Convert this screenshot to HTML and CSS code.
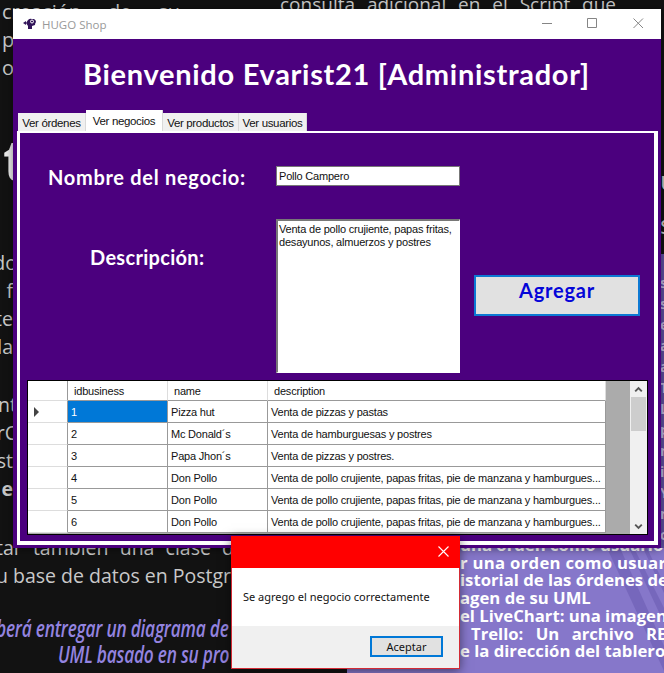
FILE: index.html
```html
<!DOCTYPE html>
<html lang="es">
<head>
<meta charset="utf-8">
<title>HUGO Shop</title>
<link rel="stylesheet" href="styles.css">
</head>
<body>
<div class="desktop">
  <div class="doc doc-intro">
    <p class="spread">creación de su</p>
    <p>p</p>
    <p>o</p>
  </div>
  <p class="doc doc-query">consulta adicional en el Script que</p>
  <p class="doc doc-heading">t</p>
  <div class="doc doc-left">
    <p class="cut">do</p><p>f</p><p>te</p><p>la</p>
  </div>
  <div class="doc doc-left doc-left-lower">
    <p class="cut">nt</p><p class="cut">rC</p><p>st</p><p class="strong">e</p>
  </div>
  <div class="doc doc-base">
    <p class="justified">tar también una clase de</p>
    <p>u base de datos en Postgr</p>
  </div>
  <div class="doc-uml">
    <p>berá entregar un diagrama de</p>
    <p class="second">UML basado en su pro</p>
  </div>
  <div class="doc doc-edge-dark"><p>u</p><p>s</p></div>
  <div class="purple-edge"><p>s</p><p>s</p><p>e</p><p>a</p><p>a</p><p>T</p><p>L</p><p>p</p><p>n</p><p>i</p><p>Y</p><p>n</p><p>c</p></div>
  <div class="purple-page">
    <svg class="streaks" viewBox="0 0 120 125" width="120" height="125"><path d="M63 0h13l44 98v25zM85 0h5l30 60v15zM99 0h4l17 36v9z" fill="#6d5db3"/></svg>
    <div class="purple-lines">
      <p>una orden como usuario n</p>
      <p class="order">r una orden como usuario</p>
      <p>istorial de las órdenes de</p>
      <p>agen de su UML</p>
      <p>el LiveChart: una imagen</p>
      <p class="trello">Trello: Un archivo RE</p>
      <p>e la dirección del tablero</p>
    </div>
  </div>

  <main class="window">
    <header class="titlebar">
      <svg class="logo" viewBox="0 0 14 12" width="14" height="12"><path d="M5 2Q7 0 9 1h2q2 1 2 3-1 1-1 3l-3 1v3H5V8L3 5Z" fill="#32145a"/><path d="M0 5l3-2v4z" fill="#32145a"/><circle cx="9" cy="3.5" r="1.5" fill="none" stroke="#fff"/></svg>
      <span class="app-name">HUGO Shop</span>
      <svg class="controls" viewBox="0 0 104 11" width="104" height="11" fill="none" stroke="#858585"><path d="M0 5.500h10M45.500 .5h9v9h-9zM91.500 .5l9.500 9.500M101 .5l-9.500 9.500"/></svg>
    </header>
    <h1>Bienvenido Evarist21 [Administrador]</h1>
    <nav class="tabs">
      <span class="tab orders">Ver órdenes</span>
      <span class="tab active">Ver negocios</span>
      <span class="tab products">Ver productos</span>
      <span class="tab users">Ver usuarios</span>
    </nav>
    <section class="panel">
      <div class="form">
        <div class="label-name">Nombre del negocio:</div>
        <div class="input">Pollo Campero</div>
        <div class="label-desc">Descripción:</div>
        <div class="textarea">Venta de pollo crujiente, papas fritas,<br>desayunos, almuerzos y postres</div>
        <button class="add">Agregar</button>
      </div>
      <div class="grid">
        <div class="cells">
          <div class="row head"><b></b><span>idbusiness</span><span>name</span><span>description</span></div>
          <div class="row"><b><i class="pointer"></i></b><span class="selected">1</span><span>Pizza hut</span><span>Venta de pizzas y pastas</span></div>
          <div class="row"><b></b><span>2</span><span>Mc Donald´s</span><span>Venta de hamburguesas y postres</span></div>
          <div class="row"><b></b><span>3</span><span>Papa Jhon´s</span><span>Venta de pizzas y postres.</span></div>
          <div class="row"><b></b><span>4</span><span>Don Pollo</span><span>Venta de pollo crujiente, papas fritas, pie de manzana y hamburgues...</span></div>
          <div class="row"><b></b><span>5</span><span>Don Pollo</span><span>Venta de pollo crujiente, papas fritas, pie de manzana y hamburgues...</span></div>
          <div class="row"><b></b><span>6</span><span>Don Pollo</span><span>Venta de pollo crujiente, papas fritas, pie de manzana y hamburgues...</span></div>
        </div>
        <div class="scrollbar">
          <svg viewBox="0 0 17 17" width="17" height="16"><path d="M5 11l3.500-3.500L12 11" fill="none" stroke="#555" stroke-width="2"/></svg>
          <div class="thumb"></div>
          <svg class="down" viewBox="0 0 17 17" width="17" height="16"><path d="M5 7l3.500 3.500L12 7" fill="none" stroke="#555" stroke-width="2"/></svg>
        </div>
      </div>
    </section>
  </main>

  <div class="dialog" role="dialog">
    <header><svg viewBox="0 0 11 11" width="11" height="11"><path d="M.5 .5l10 10M10.500 .5l-10 10" stroke="#fff" stroke-width="1.100"/></svg></header>
    <p class="message">Se agrego el negocio correctamente</p>
    <footer><button>Aceptar</button></footer>
  </div>
</div>
</body>
</html>
```
FILE: styles.css
```css
* { box-sizing: border-box; }
body, p, h1 { margin: 0; }
body { background: #121212; }
.desktop { position: relative; width: 664px; height: 673px; overflow: hidden; background: #121212; }

.doc { position: absolute; color: #c9c9c9; font: 20px/28px "Open Sans", sans-serif; white-space: nowrap; }
.doc-intro { left: 2px; top: -2px; width: 178px; }
.spread { text-align-last: justify; white-space: normal; }
.doc-query { left: 280px; top: -10px; width: 336px; text-align-last: justify; white-space: normal; font-size: 19px; }
.doc-heading { left: 3px; top: 131px; font-size: 58px; line-height: 56px; font-weight: 700; color: #eee; }
.doc-left { left: -14px; top: 249px; width: 27px; font-size: 19.5px; text-align: right; }
.doc-left-lower { top: 391px; }
.doc-left .cut { margin-right: -4px; }
.strong { font-weight: 700; }
.doc-base { left: -4px; top: 534px; width: 249px; font-size: 19.500px; }
.justified { text-align-last: justify; white-space: normal; }
.doc-uml { position: absolute; left: -4px; top: 615px; color: #9484e0; font: italic 600 24px/26px "Open Sans", sans-serif; letter-spacing: -.3px; white-space: nowrap; transform: scaleX(.72); transform-origin: 0 0; }
.doc-uml .second { padding-left: 86px; }
.doc-edge-dark { left: 660px; top: 158px; font-size: 26px; line-height: 44px; }

.purple-edge { position: absolute; left: 660px; top: 254px; width: 4px; height: 300px; padding-top: 18px; overflow: hidden; background: #5f50a0; color: #bdb6df; font: 700 14px/21px "Open Sans", sans-serif; }
.purple-page { position: absolute; left: 347px; top: 548px; width: 317px; height: 125px; background: #8677ca; overflow: hidden; }
.streaks { position: absolute; right: 0; top: 0; opacity: .6; }
.purple-lines { position: relative; margin: -12px 0 0 113px; width: 220px; color: #fff; font: 700 16.700px/17.700px "Open Sans", sans-serif; white-space: nowrap; }
.purple-lines .order { letter-spacing: .3px; }
.purple-lines .trello { margin-left: 11px; width: 193px; word-spacing: 8px; }

.window { position: absolute; left: 13px; top: 9px; width: 648px; height: 539px; display: flex; flex-direction: column; background: #4b007e; box-shadow: 0 1px 9px rgba(0, 0, 0, .45); }
.titlebar { display: flex; align-items: center; height: 30px; padding: 0 14px 0 10px; background: #fff; color: #999; font: 11.500px "Open Sans", sans-serif; }
.app-name { margin-left: 5px; flex: 1; }
.controls { margin: -1px 1px 0 0; }
h1 { height: 72px; padding-left: 70px; color: #fff; font: 700 29px/70px Lato, sans-serif; letter-spacing: .7px; white-space: nowrap; }
.tabs { display: flex; align-items: flex-end; height: 20px; padding-left: 5px; font: 11px "Liberation Sans", sans-serif; font-size: 11.500px; letter-spacing: -.34px; color: #111; }
.tab { display: flex; align-items: center; justify-content: center; height: 18px; padding-top: 2px; background: #f0f0f0; border-right: 1px solid #d9d9d9; white-space: nowrap; }
.orders { width: 68px; }
.active { width: 77px; height: 21px; padding-top: 0; background: #fff; }
.products { width: 76px; }
.users { width: 68px; }
.panel { display: flex; flex-direction: column; height: 414px; margin: 0 3px 0 4px; padding: 0 6px 6px 7px; border: solid #fff; border-width: 2px 4px 4px 3px; }
.form { display: grid; grid-template-columns: 249px 184px 1fr; grid-template-rows: 33px 20px 33px 154px; height: 247px; color: #fff; font: 700 20px/24px Lato, sans-serif; }
.label-name { grid-area: 2 / 1; margin: -1px 0 0 21px; letter-spacing: .7px; white-space: nowrap; }
.label-desc { grid-area: 4 / 1; margin: 26px 0 0 63px; letter-spacing: .3px; }
.input, .textarea { grid-column: 2; border: 1px solid #777; background: #fff; color: #111; font: 11px/13px "Liberation Sans", sans-serif; letter-spacing: -.2px; white-space: nowrap; }
.input { grid-row: 2; padding: 3px 2px; }
.textarea { grid-row: 4; padding: 2px 1px; border-width: 2px 1px 1px 2px; border-color: #777 #fff #fff #777; }
.add { grid-area: 4 / 3; width: 166px; height: 41px; margin: 56px 0 0 14px; padding: 0 0 11px; border: 2px solid #0d79d3; background: #e1e1e1; color: #0505d8; font: 700 20px/24px Lato, sans-serif; letter-spacing: .8px; }
.grid { display: flex; flex: none; width: 621px; height: 155px; border: 1px solid #000; overflow: hidden; background: #ababab; }
.cells { width: 578px; }
.row { display: grid; grid-template-columns: 40px 100px 100px 338px; height: 22px; color: #111; background: #fff; font: 11px/22px "Liberation Sans", sans-serif; letter-spacing: -.2px; white-space: nowrap; }
.row b { border: solid #ddd; border-width: 0 1px 1px 0; border-right-color: #999; }
.row span { height: 22px; padding-left: 3px; border: solid #999; border-width: 0 1px 1px 0; overflow: hidden; }
.row.head { height: 20px; line-height: 20px; }
.row.head span { height: 20px; padding-left: 6px; border-right-color: #ddd; }
.row .selected { background: #0078d7; color: #fff; }
.pointer { display: block; margin: 6px 0 0 6px; width: 0; border: 5px solid transparent; border-left-color: #444; border-right: 0; }
.scrollbar { display: flex; flex-direction: column; width: 17px; margin-left: 24px; background: #f0f0f0; }
.thumb { height: 34px; margin: 0 1px; background: #cdcdcd; }
.down { margin-top: auto; }

.dialog { position: absolute; left: 231px; top: 536px; width: 229px; height: 133px; display: flex; flex-direction: column; border: 1px solid #d32b35; background: #fff; box-shadow: 0 2px 10px rgba(0, 0, 0, .5); color: #111; font: 11px "Noto Sans", sans-serif; }
.dialog header { display: flex; align-items: center; justify-content: flex-end; height: 30px; padding: 0 10px 2px 0; background: #f00; box-shadow: 0 0 0 1px #f00; }
.message { height: 59px; padding-left: 11px; line-height: 60px; white-space: nowrap; }
.dialog footer { flex: 1; padding: 10px 16px; background: #f0f0f0; }
.dialog button { display: block; width: 73px; height: 21px; margin-left: auto; padding: 0; border: 2px solid #0078d7; background: #e1e1e1; color: #111; font: 11px/17px "Noto Sans", sans-serif; }
```
